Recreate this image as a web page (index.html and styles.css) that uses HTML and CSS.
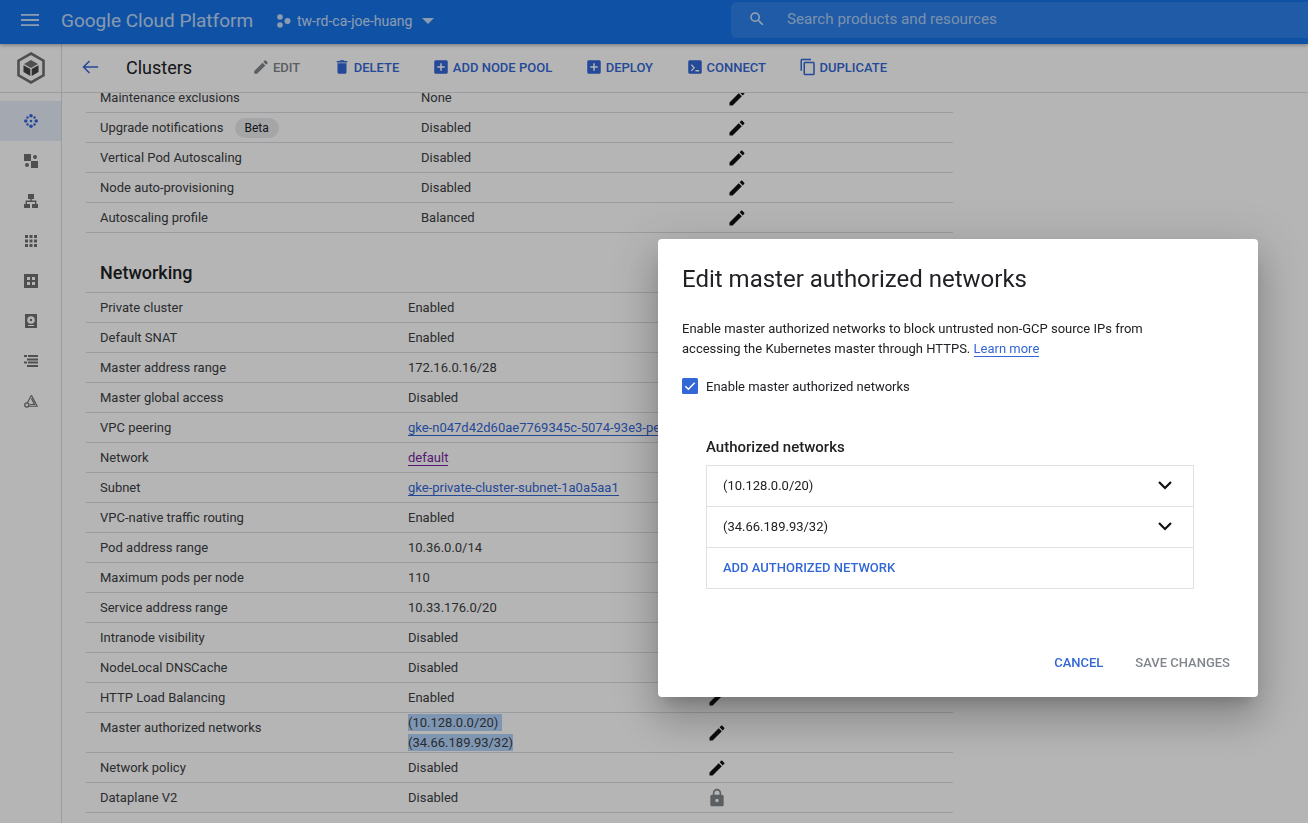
FILE: index.html
```html
<!DOCTYPE html>
<html lang="en">
<head>
  <meta charset="UTF-8" />
  <title>Clusters - Google Cloud Platform</title>
  <link rel="stylesheet" href="styles.css">
</head>
<body>
  <svg class="defs" width="0" height="0">
    <symbol id="i-edit" viewBox="0 0 24 24"><path d="M3 17.25V21h3.75L17.81 9.94l-3.75-3.75L3 17.25zM20.71 7.04c.39-.39.39-1.02 0-1.41l-2.34-2.34c-.39-.39-1.02-.39-1.41 0l-1.83 1.83 3.75 3.75 1.83-1.83z"/></symbol>
    <symbol id="i-lock" viewBox="0 0 24 24"><path d="M18 8h-1V6c0-2.76-2.24-5-5-5S7 3.24 7 6v2H6c-1.1 0-2 .9-2 2v10c0 1.1.9 2 2 2h12c1.1 0 2-.9 2-2V10c0-1.1-.9-2-2-2zm-6 9c-1.1 0-2-.9-2-2s.9-2 2-2 2 .9 2 2-.9 2-2 2zm3.1-9H8.9V6c0-1.71 1.39-3.1 3.1-3.1 1.71 0 3.1 1.39 3.1 3.1v2z"/></symbol>
    <symbol id="i-add" viewBox="0 0 24 24"><path d="M19 3H5c-1.1 0-2 .9-2 2v14c0 1.1.9 2 2 2h14c1.1 0 2-.9 2-2V5c0-1.1-.9-2-2-2zm-2 10h-4v4h-2v-4H7v-2h4V7h2v4h4v2z"/></symbol>
    <symbol id="i-chevron" viewBox="0 0 24 24"><path d="M6 9l6 6 6-6" fill="none" stroke="currentColor" stroke-width="2.2"/></symbol>
  </svg>

  <header class="topbar">
    <svg class="menu-icon" viewBox="0 0 18 12"><path d="M0 0h18v1.8H0zM0 5.1h18v1.8H0zM0 10.2h18V12H0z"/></svg>
    <span class="brand">Google Cloud Platform</span>
    <svg class="project-icon" viewBox="0 0 14 14"><circle cx="3" cy="3" r="2.8"/><circle cx="3" cy="11" r="2.8"/><circle cx="10.5" cy="7" r="3"/></svg>
    <span class="project">tw-rd-ca-joe-huang</span>
    <svg class="caret" viewBox="0 0 12 6"><path d="M0 0l6 6 6-6z"/></svg>
    <div class="search">
      <svg class="search-icon" viewBox="0 0 24 24"><path d="M15.5 14h-.79l-.28-.27A6.47 6.47 0 0 0 16 9.5 6.5 6.5 0 1 0 9.5 16c1.61 0 3.09-.59 4.23-1.57l.27.28v.79l5 4.99L20.49 19l-4.99-5zm-6 0C7.01 14 5 11.99 5 9.5S7.01 5 9.5 5 14 7.01 14 9.5 11.99 14 9.5 14z"/></svg>
      <span>Search products and resources</span>
    </div>
  </header>

  <div class="layout">
    <aside class="sidenav">
      <div class="logo">
        <svg viewBox="0 0 28 32" width="28" height="32">
          <path d="M14 1.5L26.5 8.7v14.6L14 30.5 1.5 23.3V8.7z" fill="none" stroke="#707070" stroke-width="2.6"/>
          <path d="M14 8l7 4-7 4-7-4z" fill="#707070"/>
          <path d="M6.5 13.2l6.8 3.9V24l-6.8-3.9z" fill="#444"/>
          <path d="M21.5 13.2l-6.8 3.9V24l6.8-3.9z" fill="#444"/>
        </svg>
      </div>
      <nav class="nav-list">
        <a class="nav-item active">
          <svg viewBox="0 0 14 14"><g fill="#3367d6"><circle cx="7" cy="1.8" r="1.8"/><circle cx="7" cy="12.2" r="1.8"/><circle cx="1.8" cy="7" r="1.8"/><circle cx="12.200" cy="7" r="1.8"/><circle cx="3.500" cy="3.500" r="1.200"/><circle cx="10.500" cy="3.500" r="1.200"/><circle cx="3.500" cy="10.500" r="1.200"/><circle cx="10.500" cy="10.500" r="1.200"/><circle cx="7" cy="7" r="1.300"/></g></svg>
        </a>
        <a class="nav-item">
          <svg viewBox="0 0 14 14"><path d="M0 0h7v7H0zM7 7h7v7H7z"/><circle cx="11" cy="3" r="2"/><circle cx="3" cy="11" r="2"/></svg>
        </a>
        <a class="nav-item">
          <svg viewBox="0 0 14 14"><path d="M4 0h6v5H7.700v1.600h4.700V10H14v4H8v-4h3V8H3v2h3v4H0v-4h1.600V6.600h4.700V5H4z"/></svg>
        </a>
        <a class="nav-item">
          <svg viewBox="0 0 14 14"><path d="M1 1h3v3H1zM5.500 1h3v3h-3zM10 1h3v3h-3zM1 5.500h3v3H1zM5.500 5.500h3v3h-3zM10 5.500h3v3h-3zM1 10h3v3H1zM5.500 10h3v3h-3zM10 10h3v3h-3z"/></svg>
        </a>
        <a class="nav-item">
          <svg viewBox="0 0 14 14"><path fill-rule="evenodd" d="M0 0h14v14H0zM3 3v3h3V3zM8 3v3h3V3zM3 8v3h3V8zM8 8v3h3V8z"/></svg>
        </a>
        <a class="nav-item">
          <svg viewBox="0 0 14 14"><path fill-rule="evenodd" d="M1 0h12v14H1zM7 2.200a3.800 3.800 0 1 0 0 7.600 3.800 3.800 0 0 0 0-7.600zM4 11v1h6v-1z"/><circle cx="7" cy="6" r="1.200"/></svg>
        </a>
        <a class="nav-item">
          <svg viewBox="0 0 14 14"><path d="M0 1h3v2H0zM4 1h10v2H4zM3 4.500h11v2H3zM0 7.500h3v2H0zM4 7.500h10v2H4zM3 11h11v2H3z"/></svg>
        </a>
        <a class="nav-item">
          <svg viewBox="0 0 16 15"><path d="M8.500 1L15 13.500H5M8.500 4.500L12 11.500H7" fill="none" stroke="#707070" stroke-width="1.300"/><path d="M8.500 1L3.500 10" fill="none" stroke="#707070" stroke-width="1.300"/><circle cx="3.300" cy="12" r="2.400" fill="none" stroke="#707070" stroke-width="1.500"/></svg>
        </a>
      </nav>
    </aside>

    <main class="main">
      <div class="toolbar">
        <svg class="back" viewBox="0 0 16 14"><path d="M16 7H1.500M7.500 1L1.500 7l6 6" fill="none" stroke="#3367d6" stroke-width="1.500"/></svg>
        <h2 class="page-title">Clusters</h2>
        <div class="actions">
          <a class="action disabled"><svg><use href="#i-edit"/></svg>Edit</a>
          <a class="action"><svg viewBox="0 0 24 24"><path d="M6 19c0 1.100.9 2 2 2h8c1.100 0 2-.9 2-2V7H6v12zM19 4h-3.500l-1-1h-5l-1 1H5v2h14V4z"/></svg>Delete</a>
          <a class="action"><svg><use href="#i-add"/></svg>Add node pool</a>
          <a class="action"><svg><use href="#i-add"/></svg>Deploy</a>
          <a class="action"><svg viewBox="0 0 24 24"><path fill-rule="evenodd" d="M5 3h14c1.100 0 2 .9 2 2v14c0 1.100-.9 2-2 2H5c-1.100 0-2-.9-2-2V5c0-1.100.9-2 2-2zm1.500 6.500L9.700 13l-3.200 3.500 1.300 1.200 4.300-4.700-4.300-4.700zM12.500 16v2h5v-2z"/></svg>Connect</a>
          <a class="action"><svg viewBox="0 0 24 24"><path d="M16 1H4c-1.100 0-2 .9-2 2v14h2V3h12V1zm3 4H8c-1.100 0-2 .9-2 2v14c0 1.100.9 2 2 2h11c1.100 0 2-.9 2-2V7c0-1.100-.9-2-2-2zm0 16H8V7h11v14z"/></svg>Duplicate</a>
        </div>
      </div>

      <div class="content">
        <section class="details details-top">
          <div class="row"><span>Maintenance exclusions</span><span>None</span><svg class="pen"><use href="#i-edit"/></svg></div>
          <div class="row"><span>Upgrade notifications<em class="chip">Beta</em></span><span>Disabled</span><svg class="pen"><use href="#i-edit"/></svg></div>
          <div class="row"><span>Vertical Pod Autoscaling</span><span>Disabled</span><svg class="pen"><use href="#i-edit"/></svg></div>
          <div class="row"><span>Node auto-provisioning</span><span>Disabled</span><svg class="pen"><use href="#i-edit"/></svg></div>
          <div class="row"><span>Autoscaling profile</span><span>Balanced</span><svg class="pen"><use href="#i-edit"/></svg></div>
        </section>

        <h3 class="section-title">Networking</h3>
        <section class="details details-net">
          <div class="row"><span>Private cluster</span><span>Enabled</span><svg class="lock"><use href="#i-lock"/></svg></div>
          <div class="row"><span>Default SNAT</span><span>Enabled</span><svg class="lock"><use href="#i-lock"/></svg></div>
          <div class="row"><span>Master address range</span><span>172.16.0.16/28</span><svg class="lock"><use href="#i-lock"/></svg></div>
          <div class="row"><span>Master global access</span><span>Disabled</span><svg class="pen"><use href="#i-edit"/></svg></div>
          <div class="row"><span>VPC peering</span><span class="nowrap"><a class="link">gke-n047d42d60ae7769345c-5074-93e3-peer</a></span></div>
          <div class="row"><span>Network</span><span><a class="link visited">default</a></span></div>
          <div class="row"><span>Subnet</span><span><a class="link">gke-private-cluster-subnet-1a0a5aa1</a></span></div>
          <div class="row"><span>VPC-native traffic routing</span><span>Enabled</span></div>
          <div class="row"><span>Pod address range</span><span>10.36.0.0/14</span></div>
          <div class="row"><span>Maximum pods per node</span><span>110</span></div>
          <div class="row"><span>Service address range</span><span>10.33.176.0/20</span></div>
          <div class="row"><span>Intranode visibility</span><span>Disabled</span><svg class="pen"><use href="#i-edit"/></svg></div>
          <div class="row"><span>NodeLocal DNSCache</span><span>Disabled</span><svg class="pen"><use href="#i-edit"/></svg></div>
          <div class="row"><span>HTTP Load Balancing</span><span>Enabled</span><svg class="pen"><use href="#i-edit"/></svg></div>
          <div class="row row-tall"><span>Master authorized networks</span><span class="selected"><mark>(10.128.0.0/20)&nbsp;</mark><br><mark>(34.66.189.93/32)</mark></span><svg class="pen"><use href="#i-edit"/></svg></div>
          <div class="row"><span>Network policy</span><span>Disabled</span><svg class="pen"><use href="#i-edit"/></svg></div>
          <div class="row"><span>Dataplane V2</span><span>Disabled</span><svg class="lock"><use href="#i-lock"/></svg></div>
        </section>
      </div>
    </main>
  </div>

  <div class="scrim"></div>

  <div class="dialog">
    <h1 class="dialog-title">Edit master authorized networks</h1>
    <p class="dialog-text">Enable master authorized networks to block untrusted non-GCP source IPs from accessing the Kubernetes master through HTTPS. <a class="learn">Learn more</a></p>
    <label class="check">
      <svg viewBox="0 0 16 16"><rect width="16" height="16" rx="1.500" fill="#3367d6"/><path d="M3.300 8.200l3.100 3.100 6.300-6.500" fill="none" stroke="#fff" stroke-width="1.400"/></svg>
      Enable master authorized networks
    </label>
    <h4 class="networks-title">Authorized networks</h4>
    <div class="networks">
      <div class="network"><span>(10.128.0.0/20)</span><svg><use href="#i-chevron"/></svg></div>
      <div class="network"><span>(34.66.189.93/32)</span><svg><use href="#i-chevron"/></svg></div>
      <div class="network add-network">Add authorized network</div>
    </div>
    <div class="dialog-actions">
      <a class="btn">Cancel</a>
      <a class="btn btn-off">Save changes</a>
    </div>
  </div>
</body>
</html>
```

FILE: styles.css
```css
* { box-sizing: border-box; }
html, body { height: 100%; }
body { margin: 0; font-family: Roboto, "Liberation Sans", sans-serif; font-size: 13px; color: #3c4043; background: #fff; overflow: hidden; }
.defs { position: absolute; }

.topbar { height: 44px; padding-bottom: 2px; background: #1673e8; color: #fff; display: flex; align-items: center; box-shadow: 0 1px 4px rgba(0,0,0,0.35); position: relative; z-index: 1; }
.menu-icon { width: 18px; height: 12px; margin-left: 21px; margin-top: -2px; fill: #fff; opacity: 0.75; }
.brand { margin-left: 22px; font-size: 19px; width: 192px; white-space: nowrap; opacity: 0.72; margin-top: -2px; }
.project-icon { width: 14px; height: 14px; margin-left: 24px; fill: #fff; opacity: 0.75; }
.project { margin-left: 6px; font-size: 14px; width: 119px; opacity: 0.75; white-space: nowrap; }
.caret { width: 12px; height: 6px; margin-left: 6px; fill: #fff; opacity: 0.75; }
.search { margin-left: 297px; flex: 1; height: 36px; margin-top: -2px; padding-bottom: 2px; background: rgba(255,255,255,0.1); border-radius: 6px 0 0 6px; display: flex; align-items: center; color: rgba(255,255,255,0.62); font-size: 15.200px; }
.search-icon { width: 18px; height: 18px; margin-left: 17px; margin-right: 21px; fill: rgba(255,255,255,0.8); }

.layout { display: flex; height: calc(100% - 44px); }
.sidenav { width: 62px; flex: none; border-right: 1px solid #dadce0; }
.logo { height: 49px; border-bottom: 1px solid #dadce0; display: flex; align-items: center; justify-content: center; }
.nav-list { padding-top: 8px; }
.nav-item { height: 40px; display: flex; align-items: center; justify-content: center; }
.nav-item svg { width: 14px; height: 14px; fill: #707070; overflow: visible; }
.nav-item.active { background: #e8eefa; }

.main { flex: 1; min-width: 0; display: flex; flex-direction: column; }
.toolbar { height: 49px; flex: none; border-bottom: 1px solid #dadce0; display: flex; align-items: center; padding: 0 0 2px 20px; }
.back { width: 16px; height: 14px; flex: none; }
.page-title { margin: 0 0 0 28px; width: 128px; font-size: 18px; font-weight: 400; color: #202124; }
.actions { display: flex; align-items: center; }
.action { display: flex; align-items: center; margin-right: 34.500px; font-size: 13px; font-weight: 500; text-transform: uppercase; color: #3367d6; white-space: nowrap; }
.action svg { width: 18px; height: 18px; margin-right: 3px; fill: currentColor; margin-left: -2px; }
.action.disabled { color: #80868b; }

.content { flex: 1; overflow: hidden; padding: 0 0 0 24px; }
.details { width: 867px; }
.details-top { margin-top: -10px; }
.row { display: grid; align-items: center; height: 30px; border-bottom: 1px solid #dadce0; }
.details-top .row { grid-template-columns: 321px 320px 1fr; }
.details-net .row { grid-template-columns: 308px 313px 1fr; }
.details-net { border-top: 1px solid #dadce0; }
.row > span:first-child { padding-left: 14px; display: flex; align-items: center; }
.row > span:nth-child(2) { padding-left: 14px; }
.row-tall { height: 40px; }
.row-tall > span:first-child { align-self: start; padding-top: 7px; }
.nowrap { white-space: nowrap; overflow: visible; }
.pen, .lock { width: 20px; height: 20px; }
.pen { fill: #111; }
.lock { fill: #80868b; }
.chip { margin-left: 11px; padding: 0 10px; height: 20px; line-height: 20px; border-radius: 10px; background: #e8eaed; font-style: normal; font-size: 12px; color: #202124; }
.section-title { margin: 0; height: 59px; padding: 26px 0 0 14px; font-size: 18px; line-height: 28px; font-weight: 500; color: #202124; }
.link { color: #3367d6; border-bottom: 1px solid #3367d6; }
.link.visited { color: #7b1fa2; border-color: #7b1fa2; }
.selected { line-height: 20px; }
mark { background: #b3d4fc; color: inherit; padding: 1px 0; }

.scrim { position: fixed; inset: 0; background: rgba(0,0,0,0.29); z-index: 2; }

.dialog { position: absolute; left: 658px; top: 239px; width: 600px; height: 458px; z-index: 3; background: #fff; border-radius: 4px; box-shadow: 0 11px 15px -7px rgba(0,0,0,0.2), 0 24px 38px 3px rgba(0,0,0,0.14), 0 9px 46px 8px rgba(0,0,0,0.12); padding: 24px; color: #202124; display: flex; flex-direction: column; }
.dialog-title { margin: 0; font-size: 24px; line-height: 32px; font-weight: 400; }
.dialog-text { margin: 24px 0 0; line-height: 20px; width: 480px; }
.learn { color: #3367d6; border-bottom: 1px solid #3367d6; }
.check { display: flex; align-items: center; margin-top: 17px; height: 20px; }
.check svg { width: 16px; height: 16px; margin-right: 8px; }
.networks-title { margin: 40px 0 0 24px; font-size: 15px; line-height: 22px; font-weight: 500; }
.networks { margin: 7px 0 0 24px; width: 488px; border: 1px solid #e0e0e0; }
.network { height: 41px; padding: 0 16px 2px; display: flex; align-items: center; justify-content: space-between; border-bottom: 1px solid #e0e0e0; }
.network:last-child { border-bottom: none; height: 40px; }
.network svg { width: 24px; height: 24px; color: #111; }
.add-network { font-weight: 500; text-transform: uppercase; color: #3367d6; }
.dialog-actions { margin-top: auto; display: flex; justify-content: flex-end; gap: 32px; margin-bottom: 0; }
.btn { font-weight: 500; text-transform: uppercase; color: #3367d6; line-height: 20px; }
.btn-off { color: #80868b; margin-right: 4px; }
```
